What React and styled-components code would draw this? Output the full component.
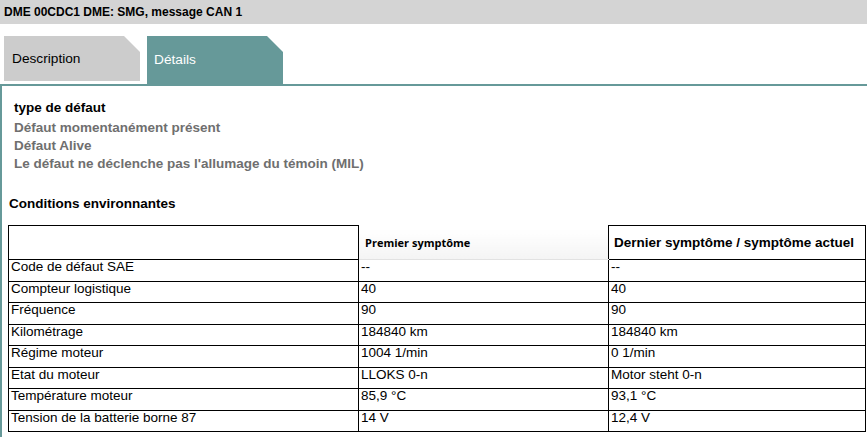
import React from "react";
import styled, { createGlobalStyle } from "styled-components";

const teal = "#669999";

const GlobalStyle = createGlobalStyle`
  body {
    margin: 0;
    background: #ffffff;
    font-family: "Liberation Sans", Arial, sans-serif;
    color: #000;
  }
`;

const TitleBar = styled.div`
  height: 24px;
  line-height: 24px;
  padding-left: 4px;
  background: #d4d4d4;
  font-size: 12px;
  font-weight: bold;
`;

const TabRow = styled.div`
  display: flex;
  align-items: flex-start;
  gap: 7px;
  height: 48px;
  padding: 12px 0 0 4px;
  border-bottom: 2px solid ${teal};
`;

const Tab = styled.div`
  width: 136px;
  height: ${(p) => (p.$active ? "48px" : "45px")};
  display: flex;
  align-items: center;
  padding-left: ${(p) => (p.$active ? "7px" : "8px")};
  padding-bottom: ${(p) => (p.$active ? "2px" : "0")};
  box-sizing: border-box;
  background: ${(p) => (p.$active ? teal : "#cccccc")};
  color: ${(p) => (p.$active ? "#ffffff" : "#000000")};
  font-size: 13.7px;
  clip-path: polygon(0 0, calc(100% - 16px) 0, 100% 16px, 100% 100%, 0 100%);
`;

const Panel = styled.div`
  border-left: 2px solid ${teal};
  padding: 13px 0 6px 0;
`;

const FaultList = styled.div`
  padding-left: 12px;
  font-size: 13.5px;
  font-weight: bold;
  line-height: 18px;
`;

const FaultLine = styled.div`
  color: ${(p) => (p.$title ? "#000000" : "#6f6f6f")};
  margin-bottom: ${(p) => (p.$title ? "2px" : "0")};
`;

const SectionTitle = styled.div`
  margin-top: 22px;
  padding-left: 7px;
  font-size: 13.5px;
  font-weight: bold;
  line-height: 18px;
`;

const Table = styled.table`
  margin: 12px 0 0 6px;
  width: 858px;
  border-collapse: collapse;
  table-layout: fixed;
  border: 1px solid #000;
  font-size: 13.5px;
`;

const HeadRow = styled.tr`
  height: 34px;
`;

const Row = styled.tr`
  height: 21.5px;
`;

const HeadCell = styled.th`
  border: 1px solid #000;
  padding: 0 0 0 5px;
  text-align: left;
  font-size: 13.5px;
  font-weight: bold;
  white-space: nowrap;
`;

const SoftHeadCell = styled.th`
  border: 1px solid #000;
  border-top-style: hidden;
  border-bottom: 1px solid #e2e2e2;
  padding: 0 0 0 6px;
  text-align: left;
  font-family: "Open Sans", "DejaVu Sans", sans-serif;
  font-size: 11px;
  font-weight: bold;
  background: linear-gradient(to bottom, #ffffff 0%, #ffffff 10%, #f4f4f4 100%);
`;

const Cell = styled.td`
  border: 1px solid #000;
  padding: 1px 0 0 2px;
  line-height: 12px;
  vertical-align: top;
  white-space: nowrap;
`;

const rows = [
  ["Code de défaut SAE", "--", "--"],
  ["Compteur logistique", "40", "40"],
  ["Fréquence", "90", "90"],
  ["Kilométrage", "184840 km", "184840 km"],
  ["Régime moteur", "1004 1/min", "0 1/min"],
  ["Etat du moteur", "LLOKS 0-n", "Motor steht 0-n"],
  ["Température moteur", "85,9 °C", "93,1 °C"],
  ["Tension de la batterie borne 87", "14 V", "12,4 V"],
];

export default function App() {
  return (
    <>
      <GlobalStyle />
      <TitleBar>DME 00CDC1 DME: SMG, message CAN 1</TitleBar>
      <TabRow>
        <Tab>Description</Tab>
        <Tab $active>Détails</Tab>
      </TabRow>
      <Panel>
        <FaultList>
          <FaultLine $title>type de défaut</FaultLine>
          <FaultLine>Défaut momentanément présent</FaultLine>
          <FaultLine>Défaut Alive</FaultLine>
          <FaultLine>Le défaut ne déclenche pas l'allumage du témoin (MIL)</FaultLine>
        </FaultList>
        <SectionTitle>Conditions environnantes</SectionTitle>
        <Table>
          <colgroup>
            <col style={{ width: 350 }} />
            <col style={{ width: 250 }} />
            <col />
          </colgroup>
          <thead>
            <HeadRow>
              <HeadCell />
              <SoftHeadCell>Premier symptôme</SoftHeadCell>
              <HeadCell>Dernier symptôme / symptôme actuel</HeadCell>
            </HeadRow>
          </thead>
          <tbody>
            {rows.map(([label, first, last]) => (
              <Row key={label}>
                <Cell>{label}</Cell>
                <Cell>{first}</Cell>
                <Cell>{last}</Cell>
              </Row>
            ))}
          </tbody>
        </Table>
      </Panel>
    </>
  );
}
